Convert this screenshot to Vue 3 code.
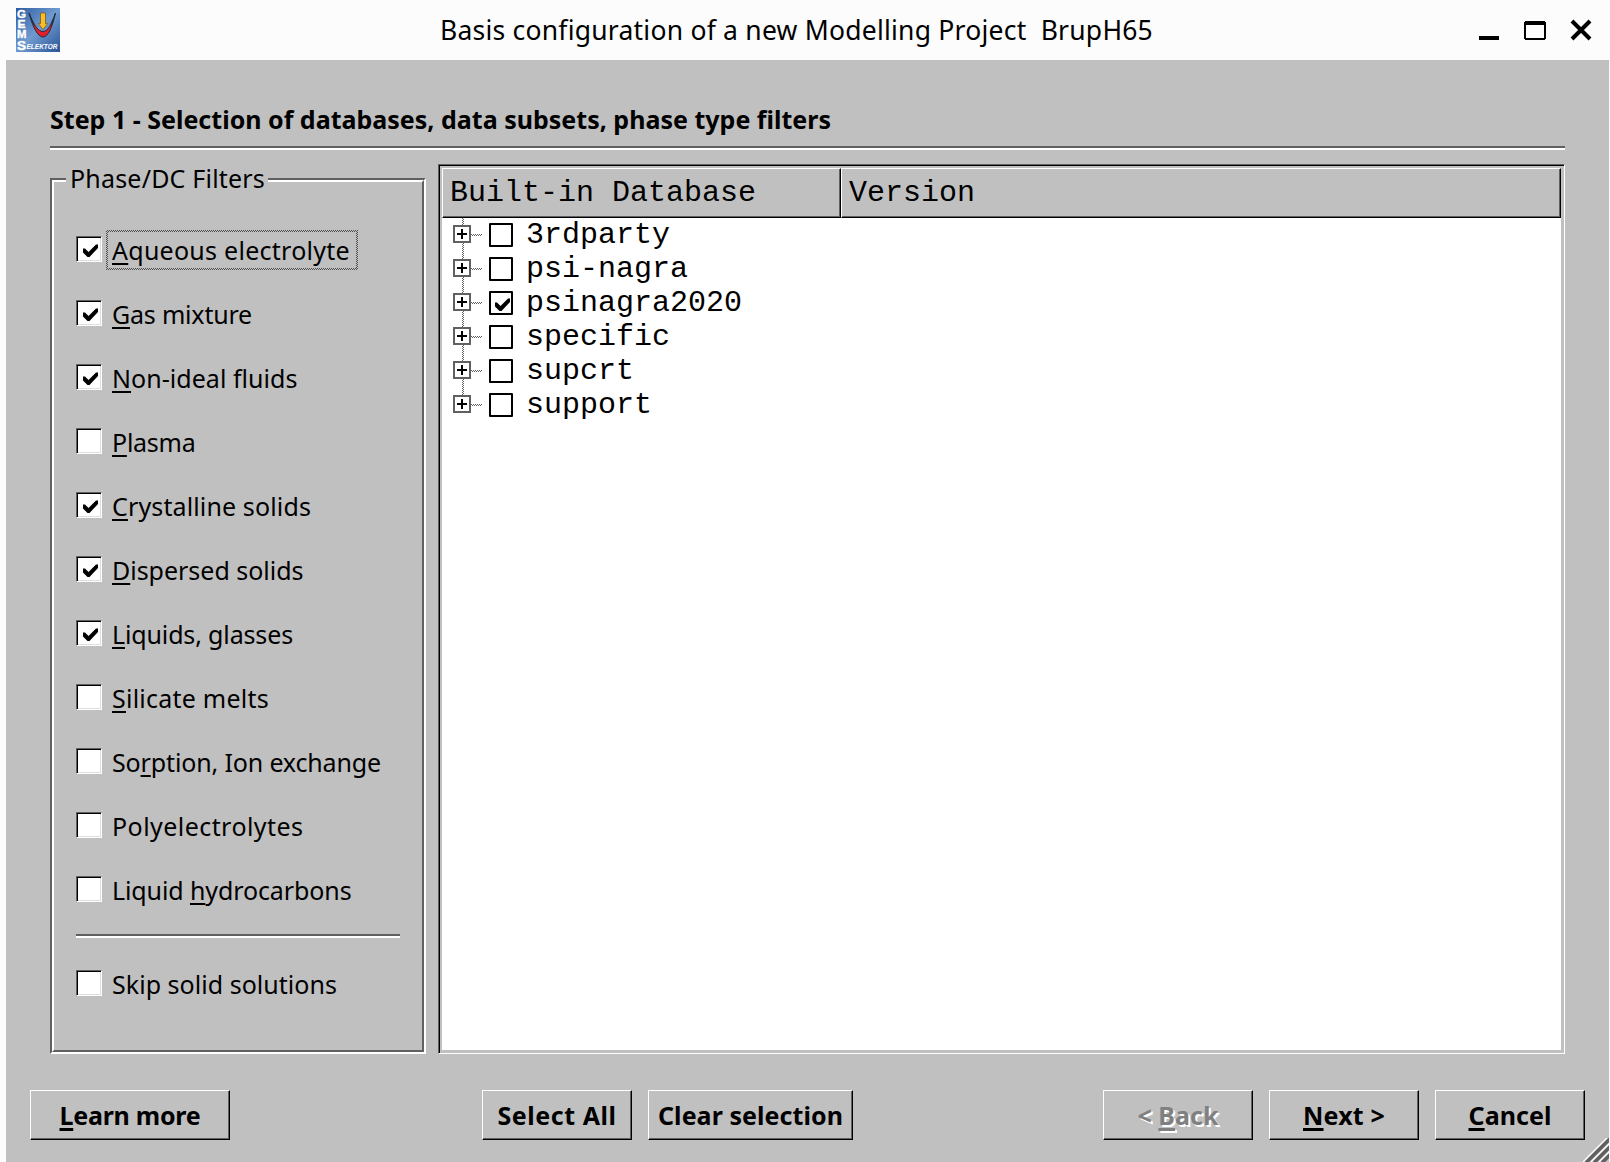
<script setup>
const filters = [
  { pre: '', key: 'A', post: 'queous electrolyte', on: true, w: 238, focus: true },
  { pre: '', key: 'G', post: 'as mixture', on: true, w: 140 },
  { pre: '', key: 'N', post: 'on-ideal fluids', on: true, w: 185.5 },
  { pre: '', key: 'P', post: 'lasma', on: false, w: 83.5 },
  { pre: '', key: 'C', post: 'rystalline solids', on: true, w: 199 },
  { pre: '', key: 'D', post: 'ispersed solids', on: true, w: 191.5 },
  { pre: '', key: 'L', post: 'iquids, glasses', on: true, w: 181 },
  { pre: '', key: 'S', post: 'ilicate melts', on: false, w: 157 },
  { pre: 'So', key: 'r', post: 'ption, Ion exchange', on: false, w: 269 },
  { pre: 'Polyelectrolytes', key: '', post: '', on: false, w: 191.5 },
  { pre: 'Liquid ', key: 'h', post: 'ydrocarbons', on: false, w: 239.5 },
]
const databases = [
  { name: '3rdparty', on: false },
  { name: 'psi-nagra', on: false },
  { name: 'psinagra2020', on: true },
  { name: 'specific', on: false },
  { name: 'supcrt', on: false },
  { name: 'support', on: false },
]
const tick = 'M0 4.500h2L5.500 8 13 .5h2V4L6.500 13h-2L0 8.500z'

// Spreads a label's letters so that it takes up the given width.
const vFit = {
  mounted(el, { value }) {
    const n = el.textContent.length
    el.style.letterSpacing = (value - el.getBoundingClientRect().width) / n + 'px'
  },
}
</script>

<template>
  <div class="window">
    <header class="titlebar">
      <svg class="logo" width="44" height="44" viewBox="0 0 44 44">
        <defs>
          <linearGradient id="bg" x1="0" y1="0" x2="1" y2="1">
            <stop offset="0" stop-color="#2c5aa0" /><stop offset=".5" stop-color="#6f9bd0" /><stop offset="1" stop-color="#2a5496" />
          </linearGradient>
          <linearGradient id="bowl" x1="0" y1="0" x2="0" y2="1">
            <stop offset=".35" stop-color="#263246" /><stop offset=".6" stop-color="#e3202a" />
          </linearGradient>
        </defs>
        <rect width="44" height="44" fill="url(#bg)" />
        <path d="M13 5C18 17 22 23.500 27 23.500S35 17 39.500 5C36 20 32 29 27 29S17 20 13 5Z" fill="url(#bowl)" stroke="#222b3c" stroke-width="1" />
        <path d="M24.500 5h5v10.500h2.200l-4.700 6-4.700-6h2.200z" fill="#f9bd28" stroke="#7c5a22" stroke-width=".8" />
        <g fill="#fff" stroke="#fff" stroke-width=".4" font-family="Liberation Sans, sans-serif" font-weight="bold">
          <text x="1" y="9.500" font-size="11" textLength="9" lengthAdjust="spacingAndGlyphs">G</text>
          <text x="1.500" y="19.500" font-size="11" textLength="8" lengthAdjust="spacingAndGlyphs">E</text>
          <text x="1" y="30" font-size="11" textLength="9.500" lengthAdjust="spacingAndGlyphs">M</text>
          <text x="1" y="41.500" font-size="12" textLength="9" lengthAdjust="spacingAndGlyphs">S</text>
        </g>
        <text x="10.500" y="41" font-size="8" textLength="31" lengthAdjust="spacingAndGlyphs" fill="#fff" font-family="Liberation Sans, sans-serif" font-weight="bold" font-style="italic">ELEKTOR</text>
      </svg>
      <h1 class="title"><span v-fit="713">Basis configuration of a new Modelling Project&nbsp; BrupH65</span></h1>
      <svg class="controls" width="114" height="24" viewBox="0 0 114 24">
        <path d="M0 17h20v4H0z" />
        <path fill-rule="evenodd" d="M46 2h20v1h1v17h-1v1H46v-1h-1V3h1zM47 6v13h18V6z" />
        <path d="M93 2l18 18M111 2L93 20" stroke="#000" stroke-width="4" />
      </svg>
    </header>

    <main class="client">
      <h2 class="step"><span v-fit="781">Step 1 - Selection of databases, data subsets, phase type filters</span></h2>
      <div class="rule"></div>
      <div class="panes">
        <section class="group">
          <div class="group-inner">
            <div class="legend"><span v-fit="195">Phase/DC Filters</span></div>
            <div v-for="f in filters" :key="f.post + f.pre" class="option">
              <span class="box"><svg v-if="f.on" width="15" height="15" viewBox="0 0 15 15"><path :d="tick" /></svg></span>
              <span class="label" :class="{ focus: f.focus }"><span v-fit="f.w" class="txt">{{ f.pre }}<span v-if="f.key" class="key">{{ f.key }}</span>{{ f.post }}</span></span>
            </div>
            <div class="rule inner-rule"></div>
            <div class="option">
              <span class="box"></span>
              <span class="label"><span v-fit="225" class="txt">Skip solid solutions</span></span>
            </div>
          </div>
        </section>

        <section class="tree">
          <div class="tree-head">
            <div class="th first">Built-in Database</div>
            <div class="th last">Version</div>
          </div>
          <div v-for="(d, i) in databases" :key="d.name" class="node">
            <svg class="branch" width="46" height="34" viewBox="0 0 46 34" shape-rendering="crispEdges">
              <path :d="i < databases.length - 1 ? 'M20.500 0V34M21.500 1V34' : 'M20.500 0V17M21.500 1V17'" stroke="#606060" stroke-dasharray="1 1" />
              <path d="M29 16.500H40M30 17.500H40" stroke="#606060" stroke-dasharray="1 1" />
              <rect x="12" y="8" width="16" height="16" fill="#fff" stroke="#606060" stroke-width="2" />
              <path d="M15 16h10M20 11v10" stroke="#000" stroke-width="2" />
            </svg>
            <span class="tbox"><svg v-if="d.on" width="15" height="15" viewBox="0 0 15 15"><path :d="tick" /></svg></span>
            <span class="name">{{ d.name }}</span>
          </div>
        </section>
      </div>

      <footer class="buttons">
        <button class="btn learn"><span v-fit="141"><span class="key">L</span>earn more</span></button>
        <button class="btn"><span v-fit="119">Select All</span></button>
        <button class="btn clear"><span v-fit="185">Clear selection</span></button>
        <button class="btn back"><span v-fit="81">&lt; <span class="key">B</span>ack</span></button>
        <button class="btn"><span v-fit="82"><span class="key">N</span>ext &gt;</span></button>
        <button class="btn"><span v-fit="83"><span class="key">C</span>ancel</span></button>
      </footer>
      <svg class="grip" width="26" height="24" viewBox="0 0 26 24">
        <path d="M3 24.500L27 .5M11 24.500L27 8.500M19 24.500L27 16.500" stroke="#606060" stroke-width="3.800" />
        <path d="M0 24L24.500 -.5M8 24L27 5M16 24L27 13" stroke="#fff" stroke-width="1.400" />
      </svg>
    </main>
  </div>
</template>

<style>
body { background: #fcfcfc; }
</style>

<style scoped>
.window {
  width: 1610px; height: 1162px; overflow: hidden; display: flex; flex-direction: column;
  background: #fcfcfc; color: #000; font: 25px/34px "Noto Sans", sans-serif; white-space: nowrap;
}
.window * { box-sizing: border-box; }
.titlebar { height: 60px; display: flex; padding-left: 16px; flex: none; }
.logo { margin-top: 8px; flex: none; overflow: visible; }
.title { margin: 13px 0 0 380px; width: 1039px; font-size: 26.5px; font-weight: 400; line-height: 34px; }
.controls { margin-top: 19px; flex: none; }
.client { position: relative; flex: 1; margin: 0 1px 0 6px; padding: 42px 0 0 44px; background: #c0c0c0; }
.step { margin: 0; height: 44px; font-size: 25px; font-weight: 700; line-height: 34px; }
.rule { width: 1515px; height: 4px; border-top: 2px solid #606060; border-bottom: 2px solid #fff; }
.panes { display: flex; gap: 12px; height: 904px; padding-top: 14px; }
.group { width: 376px; height: 876px; margin-top: 14px; border: 2px solid; border-color: #606060 #fff #fff #606060; }
.group-inner { height: 100%; border: 2px solid; border-color: #fff #606060 #606060 #fff; padding-left: 22px; }
.legend { width: 202px; height: 34px; margin: -21px 0 35px -10px; padding-left: 4px; background: #c0c0c0; }
.option { height: 40px; margin-bottom: 24px; display: flex; align-items: center; }
.box {
  width: 26px; height: 26px; margin: -2px 4px 0 0; background: #fff; flex: none;
  border: 1px solid; border-color: #606060 #fff #fff #606060; box-shadow: inset 1px 1px #000, inset -1px -1px #dfdfdf;
  display: flex; padding: 7px 0 0 6px;
}
.label { height: 40px; padding: 3px 6px 0; display: flex; }
.focus {
  border: 2px solid transparent; padding: 1px 6px 0 4px;
  background:
    linear-gradient(#c0c0c0, #c0c0c0) padding-box,
    repeating-conic-gradient(#505050 0 25%, #c0c0c0 0 50%) 0 0 / 2px 2px border-box;
}
.txt { white-space: pre; }
.key { text-decoration: underline; text-decoration-thickness: 2px; text-underline-offset: 3px; text-decoration-skip-ink: none; }
.inner-rule { width: 324px; margin: 0 0 26px; }
.tree {
  width: 1127px; height: 890px; padding: 3px; background: #fff;
  border: 1px solid; border-color: #606060 #fff #fff #606060;
  box-shadow: inset 1px 1px #000, inset -3px -3px #c0c0c0, inset 3px 3px #c0c0c0;
  font: 30px/34px "Liberation Mono", monospace;
}
.tree-head { display: flex; height: 50px; }
.th {
  border: 1px solid; border-color: #fff #000 #000 #fff; background: #c0c0c0; box-shadow: inset -1px -1px #606060;
  padding: 7px 0 0 7px;
}
.first { width: 399px; }
.last { flex: 1; }
.node { height: 34px; display: flex; }
.tbox { width: 24px; height: 24px; margin: 5px 13px 0 1px; border: 2px solid #000; border-radius: 1px; padding: 5px 0 0 4px; display: flex; }
.buttons { display: flex; gap: 16px; margin: 36px 0 0 -20px; }
.btn {
  width: 150px; height: 50px; padding: 0; font: 700 25px/34px "Noto Sans", sans-serif; color: #000; background: #c0c0c0;
  border: 1px solid; border-color: #fff #000 #000 #fff; box-shadow: inset -1px -1px #606060; border-radius: 0; flex: none;
}
.btn .key { text-decoration-thickness: 3px; }
.learn { width: 200px; margin-right: 236px; }
.clear { width: 205px; margin-right: 234px; }
.back { color: #808080; text-shadow: 2px 2px #fff; }
.grip { position: absolute; right: 0; bottom: 0; }
</style>
